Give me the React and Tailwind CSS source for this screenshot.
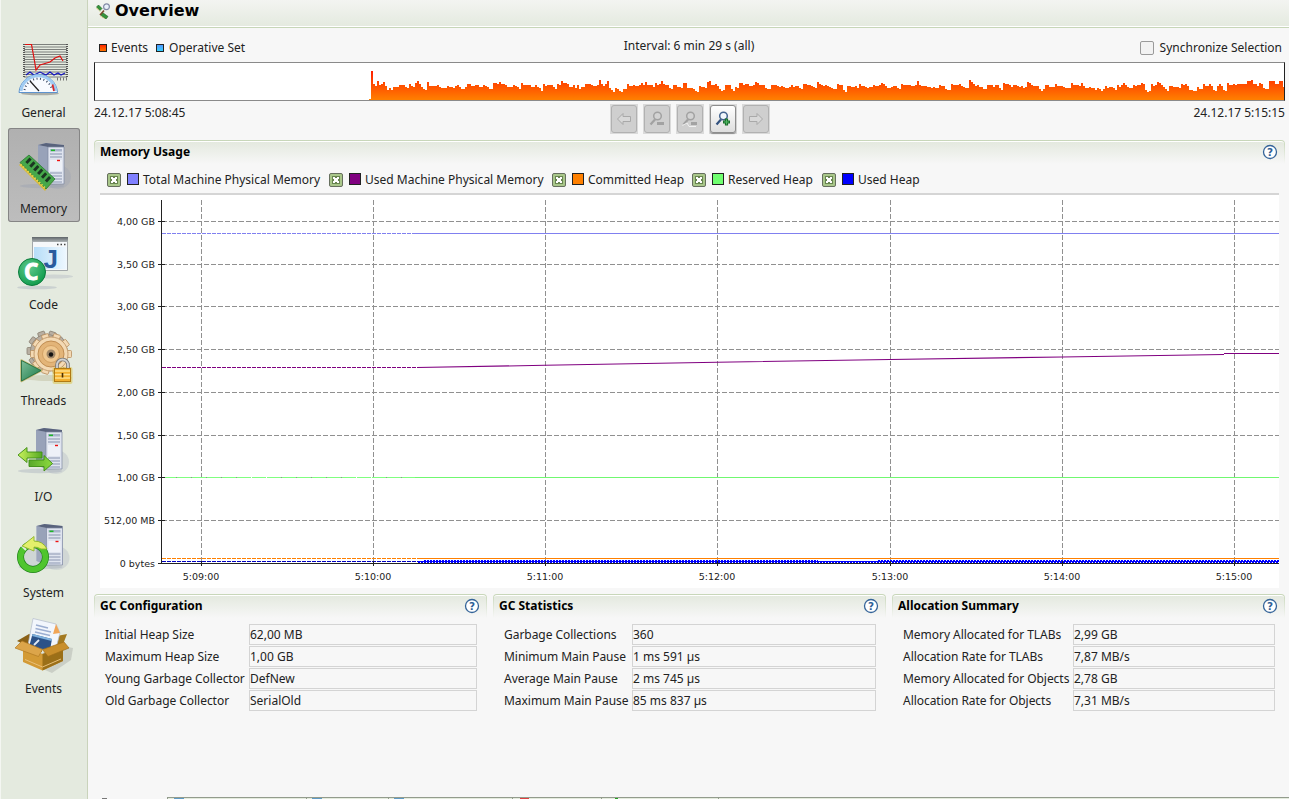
import React from 'react';

function Server({ dx = 0, dy = 0 }) {
  return (
    <g transform={`translate(${dx} ${dy})`}>
      <ellipse cx="44" cy="38" rx="13" ry="12" fill="#8f97b0" opacity="0.22" />
      <ellipse cx="28" cy="47" rx="22" ry="2.2" fill="#8f97b0" opacity="0.3" />
      <path d="M24 6 L32 4 L50 6 L50 44 L36 45 L24 41 Z" fill="#b9c0d4" />
      <path d="M24 6 L34 8 L34 45 L24 41 Z" fill="#98a2b9" />
      <path d="M24 6 L32 4 L50 6 L50 8 L34 8 Z" fill="#59637c" />
      <path d="M34 8 H50 V45 H34 Z" fill="#dfe4ef" stroke="#7c87a2" strokeWidth="0.7" />
      <path d="M36 10 H48 V12.5 H36 Z" fill="#a9b4cb" />
      <path d="M37 11.3 H41" stroke="#1fb52a" strokeWidth="1.6" />
      <path d="M36 15 H48 M36 18 H48" stroke="#8793ad" strokeWidth="1" />
      <path d="M36 21 H48 V32 H36 Z" fill="#eef1f8" />
      <path d="M43 21.5 H46" stroke="#e11" strokeWidth="1.4" />
      <path d="M36 34 H48 M36 37 H48 M36 40 H48 M36 43 H48" stroke="#8b96b2" strokeWidth="1.2" />
    </g>
  );
}

function GeneralIcon() {
  const lines = Array.from({ length: 14 }, (_, i) => 4.5 + i * 2.5);
  return (
    <>
      {lines.map((y) => (
        <path key={y} d={`M12 ${y} H55`} stroke="#7b7f7c" strokeWidth="1.2" />
      ))}
      <path d="M12 4 V38 M55 4 V38" stroke="#555" strokeWidth="2" strokeDasharray="1 1" />
      <path d="M45 39 H56" stroke="#777" strokeWidth="3" strokeDasharray="1 2" />
      <path d="M13 4.5 H19.500 L22 18 L24 30 L28 25 L38 22 L43 18 L48 16 L51 21" fill="none" stroke="#e01010" strokeWidth="1.2" />
      <path d="M14 35 L18 32 L22 35 L28 32 L34 35 L38 32 L42 35 L46 33 L49 35 L53 33" fill="none" stroke="#1414c0" strokeWidth="1.1" />
      <ellipse cx="28" cy="53.500" rx="19" ry="1.800" fill="#555" opacity="0.4" />
      <path d="M7 52.500 A19.300 19.300 0 0 1 45.500 52.500 Z" fill="#f8fbff" stroke="#5d93ce" strokeWidth="1" />
      <path d="M9 51 A17.500 17.500 0 0 1 43.700 51" fill="none" stroke="#9fcbf2" strokeWidth="2.800" />
      <path d="M12.500 50 A14 14 0 0 1 40 50" fill="none" stroke="#3c4b66" strokeWidth="2" strokeDasharray="1 2.500" />
      <path d="M40.500 44.500 L42 51" stroke="#d92727" strokeWidth="1.800" />
      <path d="M18 41 L27 51" stroke="#222" strokeWidth="1.200" />
    </>
  );
}

function MemoryIcon() {
  return (
    <>
      <Server dx={2} dy={3} />
      <path d="M7 29 L16 20 L42 44 L33 55 Z" fill="#d4b83c" />
      <path d="M8 26.500 L17 19 L43 43 L34 53 Z" fill="#46a84a" stroke="#2a7a34" strokeWidth="0.800" />
      {[0, 1, 2, 3, 4, 5].map((i) => (
        <path key={i} d="M17.500 21.500 L19.600 23.500 L15.500 28 L13.300 26 Z" fill="#1c3522" transform={`translate(${i * 3.900} ${i * 3.700})`} />
      ))}
      <path d="M8.500 28.500 L33.500 52.500" stroke="#e9d24d" strokeWidth="2" strokeDasharray="1.600 1.600" />
    </>
  );
}

function CodeIcon() {
  return (
    <>
      <ellipse cx="42" cy="44.500" rx="19" ry="2" fill="#8f97b0" opacity="0.25" />
      <ellipse cx="25" cy="55.500" rx="20" ry="1.800" fill="#8f97b0" opacity="0.300" />
      <rect x="20.500" y="5.500" width="35" height="33" fill="#f5f8fa" stroke="#8f9699" strokeWidth="0.800" />
      <rect x="20" y="5" width="36" height="5" fill="url(#winbar)" />
      <path d="M45 12.500 H54" stroke="#444" strokeWidth="1.300" strokeDasharray="1.500 2" />
      <rect x="22" y="15" width="32.500" height="22" fill="url(#winbody)" />
      <text x="31.500" y="35.500" fontFamily="Liberation Sans, sans-serif" fontWeight="700" fontSize="26" fill="#2a5b9d">J</text>
      <circle cx="20" cy="40" r="13.500" fill="url(#cgreen)" stroke="#0a7c3c" strokeWidth="1" />
      <text x="12" y="48" fontFamily="Noto Sans, sans-serif" fontWeight="700" fontSize="22.500" fill="#fff" stroke="#fff" strokeWidth="0.800">C</text>
    </>
  );
}

function Teeth({ cx, cy, r, color, stroke }) {
  return (
    <g fill={color} stroke={stroke} strokeWidth="0.800">
      {Array.from({ length: 10 }, (_, i) => (
        <rect key={i} x={cx - 3.500} y={cy - r} width="7" height="8" rx="1" transform={`rotate(${i * 36 + 18} ${cx} ${cy})`} />
      ))}
      <circle cx={cx} cy={cy} r={r - 3.500} />
    </g>
  );
}

function ThreadsIcon() {
  return (
    <>
      <ellipse cx="36" cy="50" rx="24" ry="3" fill="#9a955f" opacity="0.250" />
      <Teeth cx={35} cy={23} r={20} color="#b8afa2" stroke="#8b8274" />
      <Teeth cx={39} cy={26} r={20.500} color="#f3d9b4" stroke="#b98f60" />
      <circle cx="39" cy="26" r="13" fill="#e3b478" stroke="#c08d52" />
      <circle cx="39" cy="26" r="8.500" fill="#f0c890" stroke="#d3a164" />
      <circle cx="39" cy="26" r="4.500" fill="#a08768" />
      <circle cx="39" cy="26.500" r="2.200" fill="#111" />
      <path d="M9.500 32.500 L29 42.500 L9.500 53 Z" fill="url(#play)" stroke="#bdb66b" strokeWidth="2.400" strokeLinejoin="round" />
      <path d="M9.500 32.500 L29 42.500 L9.500 53 Z" fill="url(#play)" stroke="#19653d" strokeWidth="0.800" strokeLinejoin="round" />
      <rect x="40.500" y="39" width="20" height="17" rx="2" fill="#d8bd2d" opacity="0.450" />
      <path d="M45 41 V37 A5.500 5.500 0 0 1 56 37 V41" fill="none" stroke="#777" strokeWidth="3.600" />
      <path d="M45 41 V37 A5.500 5.500 0 0 1 56 37 V41" fill="none" stroke="#d2d2d2" strokeWidth="1.800" />
      <rect x="42.500" y="40.500" width="16" height="13" fill="#f3b02e" stroke="#b07a14" />
      <path d="M43 43 H58 M43 46.500 H58 M43 50 H58" stroke="#ffe08a" strokeWidth="1.300" />
      <path d="M50.500 45 V49.500" stroke="#4a2c00" strokeWidth="1.600" />
    </>
  );
}

function IoIcon() {
  return (
    <>
      <Server />
      <path d="M6 31 L15 23.500 V28 H30 V34 H15 V38.500 Z" fill="url(#arrowL)" stroke="#3d8c12" strokeWidth="0.900" />
      <path d="M40.500 39.500 L32 31.500 V36 H17 V42.500 H32 V47 Z" fill="url(#arrowR)" stroke="#3d8c12" strokeWidth="0.900" />
    </>
  );
}

function SystemIcon() {
  return (
    <>
      <Server dx={0.500} />
      <circle cx="21" cy="37" r="12.500" fill="#aab2c4" fillOpacity="0.350" stroke="#23851c" strokeWidth="7" />
      <circle cx="21" cy="37" r="12.500" fill="none" stroke="#4fc52f" strokeWidth="5.600" />
      <path d="M9 25 L14 30" stroke="#e4eadf" strokeWidth="2" />
      <path d="M10 26 L22 16.500 V21 Q31 21 35 29 L29 29 Q26 27 22 27 V31 Z" fill="#e3ef6b" stroke="#8db52a" strokeWidth="0.900" />
    </>
  );
}

function EventsIcon() {
  return (
    <>
      <path d="M10 44 L40 57 L59 44 L61 32 L50 30 Z" fill="#666" opacity="0.200" />
      <path d="M5 25 L17 18 L30 24 L30 36 Z" fill="#8a6116" />
      <path d="M45 20 L55 18 L50 31 L40 30 Z" fill="#a37a20" />
      <path d="M21 2.500 L44 8 L48 17 L43 36 L16 29 Z" fill="#f2f6fc" stroke="#b3bccb" strokeWidth="0.700" />
      <path d="M44 8 L48 17 L41 18 Z" fill="#f1a557" />
      <path d="M24 9 L36 12 M23.500 12.500 L39 16 M23 16 L38 19.500" stroke="#9caed1" strokeWidth="1.400" />
      <path d="M20.500 18 L40 23 L38 34 L17 31 Z" fill="#2c5288" />
      <path d="M20.500 18 L40 23 L39.600 25 L20 20 Z" fill="#7fb1dd" />
      <path d="M22 29 L27 24" stroke="#dfe9f5" strokeWidth="1.800" />
      <path d="M11 31 L30.500 38 L51 31 V45 L30.500 54.500 L11 46 Z" fill="#d39a35" />
      <path d="M30.500 38 L51 31 V45 L30.500 54.500 Z" fill="#9b6f18" />
      <path d="M3 32 L10 25 L30.500 33.500 L26.500 40.500 Z" fill="#dca54a" stroke="#b07a22" strokeWidth="0.700" />
      <path d="M30.500 33.500 L52 26 L57 32 L36 40.500 Z" fill="#c98f2c" stroke="#a26f18" strokeWidth="0.700" />
      <path d="M13 43.500 L30.500 51 L49 43" fill="none" stroke="#e8c07a" strokeWidth="1" />
    </>
  );
}

const NAV = [
  ['General', GeneralIcon],
  ['Memory', MemoryIcon],
  ['Code', CodeIcon],
  ['Threads', ThreadsIcon],
  ['I/O', IoIcon],
  ['System', SystemIcon],
  ['Events', EventsIcon],
];

function Gradients() {
  return (
    <svg className="absolute h-0 w-0">
      <defs>
        <linearGradient id="winbar" x1="0" y1="0" x2="0" y2="1"><stop offset="0" stopColor="#5e6569" /><stop offset="1" stopColor="#aeb4b6" /></linearGradient>
        <linearGradient id="winbody" x1="0" y1="0" x2="1" y2="0"><stop offset="0" stopColor="#b6ddf8" /><stop offset="1" stopColor="#eef8ff" /></linearGradient>
        <radialGradient id="cgreen" cx="0.4" cy="0.35" r="0.7"><stop offset="0" stopColor="#5fc98d" /><stop offset="1" stopColor="#0d9a4a" /></radialGradient>
        <linearGradient id="play" x1="0" y1="0" x2="1" y2="1"><stop offset="0" stopColor="#7fbf9a" /><stop offset="1" stopColor="#1a7a48" /></linearGradient>
        <linearGradient id="arrowL" x1="0" y1="0" x2="1" y2="0"><stop offset="0" stopColor="#c9f25b" /><stop offset="1" stopColor="#55a923" /></linearGradient>
        <linearGradient id="arrowR" x1="0" y1="0" x2="1" y2="0"><stop offset="0" stopColor="#59a82a" /><stop offset="1" stopColor="#8ddb3e" /></linearGradient>
      </defs>
    </svg>
  );
}

function Sidebar() {
  return (
    <nav className="flex h-full w-[88px] shrink-0 flex-col gap-[2px] border-r border-l border-r-[#c9d3bb] border-l-[#f4f6f2] bg-[#e4eadf] pt-8 pl-[7px]">
      {NAV.map(([label, Icon]) => (
        <div
          key={label}
          className={
            label === 'Memory'
              ? 'flex h-[94px] w-[72px] shrink-0 flex-col items-center rounded-[3px] bg-linear-to-b from-[#b0b0b0] to-[#bdbdbd] pt-2 shadow-[inset_0_0_0_1px_#858585]'
              : 'flex h-[94px] w-[72px] shrink-0 flex-col items-center pt-2'
          }
        >
          <svg width="64" height="64" viewBox="0 0 64 64" className="shrink-0"><Icon /></svg>
          <span className="mt-px mr-px leading-4">{label}</span>
        </div>
      ))}
    </nav>
  );
}

/* [column x, top y] steps of the event density, measured down from the frame. */
const STEPS = [
  [276, 8], [278, 21], [282, 18], [284, 22], [286, 21], [288, 19], [290, 23], [292, 27], [294, 25], [296, 27], [298, 24], [303, 22],
  [310, 24], [314, 21], [316, 23], [320, 20], [321, 18], [323, 21], [326, 24], [330, 27], [331, 19], [333, 23], [341, 22], [343, 24],
  [351, 23], [361, 22], [364, 24], [371, 21], [375, 23], [380, 22], [391, 24], [397, 20], [404, 19], [406, 21], [410, 22], [421, 24],
  [425, 20], [429, 22], [439, 22], [442, 24], [445, 28], [447, 21], [451, 22], [458, 24], [461, 21], [466, 18], [470, 20], [474, 24],
  [477, 22], [479, 25], [481, 22], [483, 26], [486, 24], [489, 21], [501, 22], [504, 17], [506, 21], [511, 18], [514, 25], [516, 27],
  [519, 25], [524, 28], [528, 26], [532, 21], [546, 20], [550, 19], [552, 22], [557, 24], [560, 20], [565, 18], [567, 21], [573, 25],
  [577, 22], [585, 25], [587, 20], [592, 25], [600, 28], [603, 23], [607, 24], [612, 19], [614, 18], [616, 22], [620, 21], [624, 26],
  [630, 22], [635, 26], [640, 24], [643, 20], [650, 21], [659, 19], [663, 22], [670, 25], [675, 22], [686, 23],
  [696, 22], [704, 25], [708, 21], [715, 23], [722, 19], [725, 22], [734, 24], [742, 21], [748, 27], [752, 23], [763, 21], [770, 24],
  [778, 22], [786, 20], [790, 23], [801, 25], [806, 21], [814, 22], [822, 18], [824, 22], [833, 24], [844, 22], [850, 26], [856, 21],
  [866, 23], [874, 17], [877, 21], [884, 24], [892, 22], [903, 25], [908, 20], [914, 22], [925, 23], [932, 19], [936, 22], [944, 26],
  [950, 22], [960, 21], [968, 24], [975, 20], [981, 22],
  [986, 20], [988, 23], [998, 25], [1004, 26], [1009, 23], [1017, 25], [1021, 22], [1027, 20], [1031, 24], [1037, 22], [1046, 20],
  [1050, 27], [1055, 21], [1062, 19], [1066, 22], [1069, 26], [1073, 23], [1086, 21], [1094, 27], [1102, 24], [1108, 21], [1113, 25],
  [1114, 21], [1118, 27], [1121, 23], [1123, 21], [1127, 27], [1131, 20], [1141, 21], [1147, 21], [1151, 18], [1155, 17], [1157, 21],
  [1163, 20], [1168, 25], [1173, 18], [1179, 21], [1184, 18], [1187, 24],
];

const noise = (i) => {
  const v = Math.sin(i * 12.9898) * 43758.5453;
  return v - Math.floor(v);
};

function eventsPath() {
  let d = 'M274 38 V37 H276';
  let step = 0;
  for (let x = 276; x < 1189; x += 2) {
    while (step + 1 < STEPS.length && STEPS[step + 1][0] <= x) step += 1;
    const jitter = STEPS[step][0] >= x - 1 ? 0 : Math.floor(noise(Math.floor(x / 3)) * 3) - 0;
    d += ` V${STEPS[step][1] + 1 + jitter} H${Math.min(1189, x + 2)}`;
  }
  return `${d} V38 Z`;
}

function Timeline() {
  return (
    <div className="h-[39px] w-[1191px] border border-x-[#222] border-y-[#8a8a8a] bg-white">
      <svg width="1189" height="37" viewBox="0 1 1189 37" className="block" shapeRendering="crispEdges">
        <defs>
          <linearGradient id="ev" gradientUnits="userSpaceOnUse" x1="0" y1="0" x2="0" y2="38">
            <stop offset="0" stopColor="#ff0000" />
            <stop offset="1" stopColor="#ff8000" />
          </linearGradient>
        </defs>
        <path d={eventsPath()} fill="url(#ev)" />
      </svg>
    </div>
  );
}

function Lens({ active }) {
  return (
    <>
      <path d="M6.500 19.500 L11 14.500" stroke={active ? '#33527f' : '#a2a2a2'} strokeWidth="2.200" />
      <circle cx="13.500" cy="11" r="3.800" fill={active ? '#f2f7fc' : '#d3d3d3'} stroke={active ? '#45648f' : '#a2a2a2'} strokeWidth="1.500" />
    </>
  );
}

function ToolButton({ kind }) {
  const active = kind === 'plus';
  const arrow = kind === 'left' || kind === 'right';
  return (
    <div className="h-[30px] w-7 bg-[#dadada] p-px">
      <div
        className={
          active
            ? 'h-7 w-[26px] rounded-[3px] border border-[#8d8d8d] bg-linear-to-b from-white to-[#dedede] shadow-[0_1px_1px_#8d8d8d]'
            : 'h-7 w-[26px] rounded-[3px] border border-[#b1b1b1] bg-[#cfcfcf]'
        }
      >
        <svg width="24" height="26" viewBox={arrow ? '0 0 24 26' : '1 1 24 26'} className="block">
          {kind === 'left' && <path d="M5.500 13 L11 7.500 V10.500 H18.500 V15.500 H11 V18.500 Z" fill="#d8d8d8" stroke="#a9a9a9" />}
          {kind === 'right' && <path d="M18.500 13 L13 7.500 V10.500 H5.500 V15.500 H13 V18.500 Z" fill="#d8d8d8" stroke="#a9a9a9" />}
          {kind === 'minus' && <><Lens /><path d="M13 18.500 H20" stroke="#a2a2a2" strokeWidth="3" /></>}
          {kind === 'fit' && <><Lens /><path d="M5.500 20.500 L10 18 L12 21.500 H19" fill="none" stroke="#f0f0f0" /><path d="M14 18.500 H20" stroke="#a2a2a2" strokeWidth="3" /></>}
          {active && <><Lens active /><path d="M16.500 13.500 V20.500 M13 17 H20" stroke="#1c6e2c" strokeWidth="3.200" /><path d="M16.500 14.500 V19.500 M14 17 H19" stroke="#4fb862" strokeWidth="1" /></>}
        </svg>
      </div>
    </div>
  );
}

function Help() {
  return (
    <svg width="16" height="16" viewBox="0 0 16 16" className="mb-[2px] shrink-0">
      <circle cx="8" cy="8" r="6.500" fill="#fff" stroke="#356499" strokeWidth="1.300" />
      <text x="8" y="12" textAnchor="middle" fontFamily="DejaVu Sans, sans-serif" fontWeight="700" fontSize="10.500" fill="#2f5f96">?</text>
    </svg>
  );
}

function SectionTitle({ children }) {
  return (
    <div className="h-6 rounded-t-[4px] bg-linear-to-b from-[#c7d6b8] to-[#f7f7f7] px-px pt-px">
      <div className="flex h-[23px] items-center justify-between rounded-t-[3px] border-t border-white bg-linear-to-b from-[#e4e9df] to-[#f7f7f7] pr-[6px] pl-[5px]">
        <h2 className="mb-[2px] text-[12px] leading-[20px] font-bold text-black">{children}</h2>
        <Help />
      </div>
    </div>
  );
}

const SERIES = [
  ['Total Machine Physical Memory', 'bg-[#8080ff]', 'w-[222px]'],
  ['Used Machine Physical Memory', 'bg-[#800080]', 'w-[223px]'],
  ['Committed Heap', 'bg-[#ff8000]', 'w-[140px]'],
  ['Reserved Heap', 'bg-[#70ff70]', 'w-[130px]'],
  ['Used Heap', 'bg-[#0000ff]', 'w-[100px]'],
];

function Checked() {
  return (
    <svg width="14" height="14" viewBox="0 0 14 14" className="shrink-0">
      <rect x="0.500" y="0.500" width="13" height="13" rx="1.500" fill="#a9c78a" stroke="#666f5e" />
      <rect x="3" y="3" width="8" height="8" fill="#688450" />
      <path d="M4 4 H6 V5 H8 V4 H10 V6 H9 V8 H10 V10 H8 V9 H6 V10 H4 V8 H5 V6 H4 Z" fill="#fff" />
    </svg>
  );
}

const Y_TICKS = [
  [221, '4,00 GB'], [264, '3,50 GB'], [306, '3,00 GB'], [349, '2,50 GB'], [392, '2,00 GB'],
  [435, '1,50 GB'], [477, '1,00 GB'], [520, '512,00 MB'], [563, '0 bytes'],
];
const X_TICKS = [
  [201, '5:09:00'], [373, '5:10:00'], [545, '5:11:00'], [717, '5:12:00'],
  [890, '5:13:00'], [1062, '5:14:00'], [1234, '5:15:00'],
];

function Chart() {
  return (
    <svg width="1179" height="393" viewBox="100 195 1179 393" className="block bg-white">
      <g shapeRendering="crispEdges" fill="none" strokeWidth="1">
        {X_TICKS.map(([x]) => (
          <path key={x} d={`M${x + 0.5} 200 V563`} stroke="#909090" strokeDasharray="5 2" />
        ))}
        {Y_TICKS.slice(0, 8).map(([y]) => (
          <path key={y} d={`M162 ${y + 0.5} H1279`} stroke="#909090" strokeDasharray="5 2" />
        ))}
        <path d="M162 233.500 H417" stroke="#8080f0" strokeDasharray="4 1" />
        <path d="M415 233.500 H1279" stroke="#8080f0" />
        <path d="M162 477.500 H417" stroke="#80ff80" strokeDasharray="14 1" />
        <path d="M415 477.500 H1279" stroke="#70f870" />
        <path d="M162 367.500 H417" stroke="#800080" strokeDasharray="4 1" />
        <path d="M1224 353.500 H1279" stroke="#800080" />
        <path d="M162 558.500 H417" stroke="#ff8000" strokeDasharray="4 1" />
        <path d="M417 558.500 H1279" stroke="#ff8000" />
        <path d="M162 561.500 H418" stroke="#0000c0" strokeDasharray="4 1" />
        <path d="M418 562.500 H1279" stroke="#0000ff" strokeDasharray="2 1" />
        <path d="M424 560.500 H818 M878 560.500 H1279" stroke="#0000ff" strokeDasharray="2 1" />
        <path d="M418 561.500 H1279" stroke="#0000ff" />
        <path d="M161.500 200 V564 M158 563.500 H1279" stroke="#222" />
        {Y_TICKS.map(([y]) => (
          <path key={y} d={`M158 ${y + 0.5} H165`} stroke="#222" />
        ))}
        {X_TICKS.map(([x]) => (
          <path key={x} d={`M${x + 0.5} 561 V566`} stroke="#222" />
        ))}
      </g>
      <path d="M417 367.500 L545 365.300 L717 362.200 L890 359.500 L1062 357 L1224 354.500" fill="none" stroke="#800080" strokeWidth="1.100" />
      <g fontFamily="DejaVu Sans, sans-serif" fontSize="9.500" fill="#222">
        {Y_TICKS.map(([y, t]) => (
          <text key={t} x="155" y={y + 4} textAnchor="end">{t}</text>
        ))}
        {X_TICKS.map(([x, t]) => (
          <text key={t} x={x} y="580" textAnchor="middle">{t}</text>
        ))}
      </g>
    </svg>
  );
}

const PANELS = [
  ['GC Configuration', 'w-36', 'w-[228px]', [
    ['Initial Heap Size', '62,00 MB'],
    ['Maximum Heap Size', '1,00 GB'],
    ['Young Garbage Collector', 'DefNew'],
    ['Old Garbage Collector', 'SerialOld'],
  ]],
  ['GC Statistics', 'w-32', 'w-[244px]', [
    ['Garbage Collections', '360'],
    ['Minimum Main Pause', '1 ms 591 µs'],
    ['Average Main Pause', '2 ms 745 µs'],
    ['Maximum Main Pause', '85 ms 837 µs'],
  ]],
  ['Allocation Summary', 'w-[170px]', 'w-[202px]', [
    ['Memory Allocated for TLABs', '2,99 GB'],
    ['Allocation Rate for TLABs', '7,87 MB/s'],
    ['Memory Allocated for Objects', '2,78 GB'],
    ['Allocation Rate for Objects', '7,31 MB/s'],
  ]],
];

const TABS = [
  ['w-[139px] pl-[6px]', 'w-[10px] bg-[#5f9ac6]'],
  ['w-[82px] pl-[5px]', 'w-[10px] bg-[#5f9ac6]'],
  ['w-[124px] pl-[5px]', 'w-[10px] bg-[#5f9ac6]'],
  ['w-[89px] pl-[7px]', 'w-[9px] bg-[#e04040]'],
  ['w-[117px] pl-[13px]', 'w-[3px] bg-[#22a022]'],
];

export default function App() {
  return (
    <div className="flex h-[799px] w-[1289px] overflow-hidden bg-[#f7f7f7] font-['Noto_Sans',sans-serif] text-[12px] text-[#222] whitespace-nowrap">
      <Gradients />
      <Sidebar />
      <main className="flex min-w-0 flex-1 flex-col">
        <header className="flex h-7 shrink-0 items-start gap-[5px] border-b border-[#c7d6b8] bg-linear-to-b from-[#f3f4f1] to-[#e4eadf] pl-2 shadow-[inset_0_-1px_0_#fff]">
          <svg width="14" height="16" viewBox="0 0 14 16" className="mt-[3px]">
            <path d="M0.500 4 L2.500 2 L6 5.500 L4 7.500 Z M4.500 12 L6.500 9.500 L12 13.500 L10 16 Z" fill="#35963a" stroke="#1e5c24" strokeWidth="0.600" />
            <path d="M0.500 5 L4 8.500 M4.500 13 L9 16" stroke="#d8c84c" strokeDasharray="1 1" />
            <path d="M8 7.500 L4 12" stroke="#7b4a2a" strokeWidth="1.600" />
            <circle cx="10.500" cy="3.800" r="2.900" fill="#e9effa" stroke="#8289a5" strokeWidth="1.200" />
          </svg>
          <h1 className="pt-px font-['DejaVu_Sans',sans-serif] text-[16px] leading-[20px] font-bold text-black">Overview</h1>
        </header>

        <div className="flex h-[769px] shrink-0 flex-col pl-[6px]">
          <div className="flex h-[34px] w-[1191px] items-center pt-[5px]">
            <div className="flex flex-1 items-center pl-[5px]">
              <span className="mr-1 h-2 w-2 border border-[#222] bg-linear-to-b from-[#ff2000] to-[#ff7000]" />
              Events
              <span className="mr-[5px] ml-2 h-2 w-2 border border-[#222] bg-linear-to-b from-[#5098ff] to-[#30d0ff]" />
              Operative Set
            </div>
            <span className="mr-[3px] pb-1">Interval: 6 min 29 s (all)</span>
            <div className="flex flex-1 items-center justify-end gap-[6px] pr-[3px]">
              <span className="h-[14px] w-[14px] rounded-[2px] border border-[#9a9a9a] bg-[#f2f2f2]" />
              Synchronize Selection
            </div>
          </div>
          <Timeline />
          <div className="flex h-[39px] w-[1191px] items-start justify-between pt-[3px]">
            <span className="flex-1 leading-[18px]">24.12.17 5:08:45</span>
            <div className="flex gap-[5px]">
              <ToolButton kind="left" />
              <ToolButton kind="minus" />
              <ToolButton kind="fit" />
              <ToolButton kind="plus" />
              <ToolButton kind="right" />
            </div>
            <span className="flex-1 text-right leading-[18px]">24.12.17 5:15:15</span>
          </div>

          <section className="h-[454px] w-[1191px]">
            <SectionTitle>Memory Usage</SectionTitle>
            <div className="mx-[6px] flex h-[31px] items-center border-b-2 border-[#d5d5d5] pt-[2px] pl-[7px]">
              {SERIES.map(([name, color, width]) => (
                <div key={name} className={`flex shrink-0 items-center ${width}`}>
                  <Checked />
                  <span className={`mr-1 mb-[2px] ml-[6px] h-3 w-3 shrink-0 border border-[#222] ${color}`} />
                  <span>{name}</span>
                </div>
              ))}
            </div>
            <div className="pl-[6px]"><Chart /></div>
          </section>

          <div className="flex gap-[6px]">
            {PANELS.map(([title, labelWidth, fieldWidth, rows]) => (
              <section key={title} className="w-[393px]">
                <SectionTitle>{title}</SectionTitle>
                <div className="flex flex-col gap-px pt-[6px] pl-[11px]">
                  {rows.map(([label, value]) => (
                    <div key={label} className="flex h-[21px] items-center">
                      <span className={`shrink-0 tracking-[-0.04px] ${labelWidth}`}>{label}</span>
                      <span className={`h-[21px] shrink-0 border border-[#d4d4d4] leading-[19px] ${fieldWidth}`}>{value}</span>
                    </div>
                  ))}
                </div>
              </section>
            ))}
          </div>
        </div>

        <footer className="flex h-[2px] shrink-0">
          <div className="h-[2px] w-[79px] pt-px pl-[14px]"><div className="h-px w-[5px] bg-[#777]" /></div>
          <div className="flex h-[2px] flex-1 border-t border-l border-[#939c8d] bg-[#e4ebdd]">
            {TABS.map(([tab, dot], i) => (
              <div key={i} className={`h-px shrink-0 border-r border-[#939c8d] ${tab}`}>
                <div className={`h-px ${dot}`} />
              </div>
            ))}
          </div>
        </footer>
      </main>
    </div>
  );
}
